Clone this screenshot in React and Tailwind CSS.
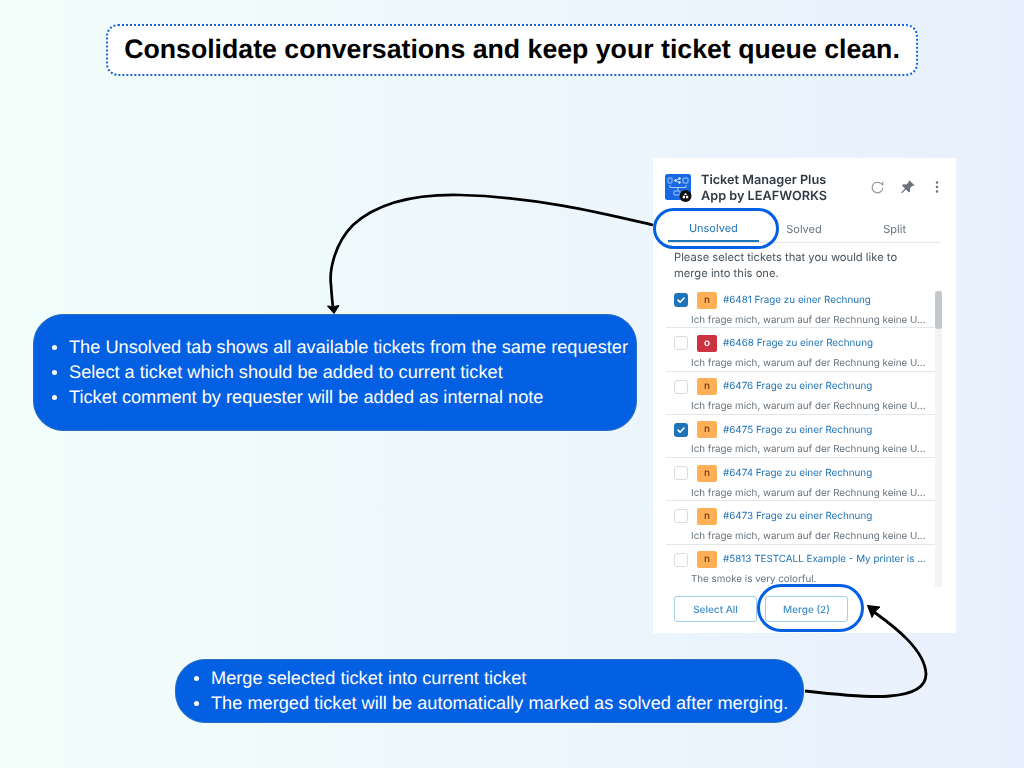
import React from "react";

const rows = [
  { c: true, b: "n", t: "#6481 Frage zu einer Rechnung", d: "Ich frage mich, warum auf der Rechnung keine U..." },
  { c: false, b: "o", t: "#6468 Frage zu einer Rechnung", d: "Ich frage mich, warum auf der Rechnung keine U..." },
  { c: false, b: "n", t: "#6476 Frage zu einer Rechnung", d: "Ich frage mich, warum auf der Rechnung keine U..." },
  { c: true, b: "n", t: "#6475 Frage zu einer Rechnung", d: "Ich frage mich, warum auf der Rechnung keine U..." },
  { c: false, b: "n", t: "#6474 Frage zu einer Rechnung", d: "Ich frage mich, warum auf der Rechnung keine U..." },
  { c: false, b: "n", t: "#6473 Frage zu einer Rechnung", d: "Ich frage mich, warum auf der Rechnung keine U..." },
  { c: false, b: "n", t: "#5813 TESTCALL Example - My printer is ...", d: "The smoke is very colorful." },
];

function Logo() {
  return (
    <svg width="29" height="29" viewBox="0 0 29 29" className="mt-[1px] shrink-0">
      <rect x="1" y="0" width="26" height="26" rx="2.5" fill="#1668e3" />
      <g fill="none" stroke="#bcd6fb" strokeWidth="0.9">
        <rect x="4" y="4" width="4" height="5" rx="0.8" />
        <rect x="19" y="4" width="5" height="5" rx="0.8" />
        <circle cx="11.5" cy="6.5" r="1" fill="#fff" />
        <circle cx="15.5" cy="4.5" r="1" fill="#fff" />
        <circle cx="15.5" cy="8.5" r="1" fill="#fff" />
        <path d="M11.5 6.5L15.5 4.5M11.5 6.5L15.5 8.5M6 11v2.5h16V11M14 13.5v3" />
        <rect x="10" y="17" width="6" height="4" rx="0.6" />
      </g>
      <circle cx="21.5" cy="22" r="6" fill="#111" />
      <path d="M21.5 18.7l1.5 2.3h-3zM18.8 21.8H21v2.4h-2.2zM22 21.8h2.2v2.4H22z" fill="#fff" />
    </svg>
  );
}

function Bullets({ items }) {
  return (
    <ul className="whitespace-nowrap">
      {items.map((t) => (
        <li key={t} className="flex items-center">
          <span className="mr-[12.5px] h-[5px] w-[5px] shrink-0 rounded-full bg-white" />
          <span>{t}</span>
        </li>
      ))}
    </ul>
  );
}

function Row({ r, last }) {
  return (
    <div className={last ? "ml-[13px] mr-[21px] flex h-[43.3px] shrink-0 flex-col pl-[8px] pt-[6.5px]" : "ml-[13px] mr-[21px] flex h-[43.3px] shrink-0 flex-col border-b border-[#e4e7ea] pl-[8px] pt-[6.5px]"}>
      <div className="flex h-[17px] items-center">
        {r.c ? (
          <span className="flex h-[14px] w-[14px] items-center justify-center rounded-[3px] bg-[#1f73b7]">
            <svg width="10" height="10" viewBox="0 0 10 10">
              <path d="M2 5.2l2.1 2L8 3" fill="none" stroke="#fff" strokeWidth="1.6" strokeLinecap="round" strokeLinejoin="round" />
            </svg>
          </span>
        ) : (
          <span className="h-[14px] w-[14px] rounded-[3px] border border-[#d8dcde] bg-white" />
        )}
        <span
          className={
            r.b === "n"
              ? "ml-[9px] flex h-[17px] w-[20px] items-center justify-center rounded-[2px] bg-[#ffb057] text-[10px] font-medium text-[#703815]"
              : "ml-[9px] flex h-[17px] w-[20px] items-center justify-center rounded-[2px] bg-[#cc3340] text-[10px] font-semibold text-white"
          }
        >
          {r.b}
        </span>
        <span className="ml-[6px] whitespace-nowrap text-[9.85px] text-[#1f73b7]">{r.t}</span>
      </div>
      <div className="ml-[17px] mt-[5px] whitespace-nowrap text-[9.8px] leading-[14px] text-[#68737d]">{r.d}</div>
    </div>
  );
}

export default function App() {
  return (
    <div className="relative flex h-[768px] w-[1024px] flex-col overflow-hidden bg-gradient-to-r from-[#f2fefa] to-[#e8f0fd] font-['Liberation_Sans',sans-serif] [text-rendering:geometricPrecision]">
      <div className="mx-[106px] mt-[24px] flex h-[52px] items-center justify-center rounded-[12px] border-2 border-dotted border-[#1a66e0] bg-white pb-[2px] text-[26.7px] font-bold text-black">
        Consolidate conversations and keep your ticket queue clean.
      </div>

      <div className="ml-[33px] mt-[82px] flex items-start">
        <div className="mt-[156px] flex h-[117px] w-[604px] items-center rounded-[30px] border border-[#2a70bd] bg-[#0460e2] pl-[17.5px] text-[18.2px] leading-[25px] text-white">
          <Bullets
            items={[
              "The Unsolved tab shows all available tickets from the same requester",
              "Select a ticket which should be added to current ticket",
              "Ticket comment by requester will be added as internal note",
            ]}
          />
        </div>

        <div className="ml-[16px] flex h-[475px] w-[303px] flex-col bg-white font-['Inter',sans-serif] blur-[0.4px]">
          <div className="flex h-[50px] items-start pl-[11px] pt-[15px]">
            <Logo />
            <div className="ml-[8px] w-[128px] whitespace-nowrap text-[12.7px] font-semibold leading-[16px] text-[#2f3941]">
              <div>Ticket Manager Plus</div>
              <div>App by LEAFWORKS</div>
            </div>
            <div className="ml-[41px] mt-[6px] flex items-center gap-[15px]">
              <svg width="15" height="15" viewBox="0 0 15 15" fill="none" stroke="#87929d" strokeWidth="1.1">
                <path d="M12.7 8.2A5.3 5.3 0 1 1 10.8 3.4L12.8 5V2" strokeLinecap="round" strokeLinejoin="round" />
              </svg>
              <svg width="16" height="16" viewBox="0 0 16 16" fill="#68737d">
                <path d="M9.6 1.4l5 5-1.3.7-1-.4-2.4 2.5.3 3.1-1.2 1.2-3-3-4 3.8-.8-.8 3.8-4-3-3L3.2 5.3l3.1.3 2.5-2.4-.4-1z" />
              </svg>
              <svg width="8" height="14" viewBox="0 0 8 14" fill="#68737d" className="ml-[2px]">
                <circle cx="4" cy="2.5" r="1.25" />
                <circle cx="4" cy="7" r="1.25" />
                <circle cx="4" cy="11.5" r="1.25" />
              </svg>
            </div>
          </div>

          <div className="mx-[15px] flex h-[35px] w-[272px] border-b border-[#e4e7ea] text-[11px] text-[#68737d]">
            <div className="flex h-[34px] w-[91px] items-center justify-center border-b-[2px] border-[#1f73b7] pt-[8px] text-[#1f73b7]">Unsolved</div>
            <div className="flex h-[34px] w-[91px] items-center justify-center pt-[8px]">Solved</div>
            <div className="flex h-[34px] w-[91px] items-center justify-center pt-[8px]">Split</div>
          </div>

          <p className="ml-[21px] mt-[6px] w-[250px] text-[11.2px] leading-[16px] text-[#49545c]">
            Please select tickets that you would like to merge into this one.
          </p>

          <div className="relative mt-[4px] h-[302px] overflow-hidden">
            <div className="flex flex-col">
              {rows.map((r, i) => (
                <Row key={r.t} r={r} last={i === rows.length - 1} />
              ))}
            </div>
            <div className="absolute right-[14px] top-[6px] bottom-0 w-[7px] bg-[#f2f3f4]" />
            <div className="absolute right-[14px] top-[6px] h-[38px] w-[7px] rounded-[3px] bg-[#c2c8cc]" />
          </div>

          <div className="ml-[21px] mt-[9px] flex gap-[8px] text-[10px] font-medium text-[#3f8dca]">
            <div className="flex h-[26px] w-[83px] items-center justify-center rounded-[3px] border border-[#a4cdec] pt-[3px]">Select All</div>
            <div className="flex h-[26px] w-[83px] items-center justify-center rounded-[3px] border border-[#a4cdec] pt-[3px]">Merge (2)</div>
          </div>
        </div>
      </div>

      <div className="ml-[175px] mt-[26px] flex h-[64px] w-[629px] items-center rounded-[30px] border border-[#2a70bd] bg-[#0460e2] pl-[17.5px] text-[18.2px] leading-[25px] text-white">
        <Bullets
          items={[
            "Merge selected ticket into current ticket",
            "The merged ticket will be automatically marked as solved after merging.",
          ]}
        />
      </div>

      <div className="absolute left-[653px] top-[208px] h-[41px] w-[126px] rounded-[21px] border-[3.5px] border-[#0460e2]" />
      <div className="absolute left-[757px] top-[584px] h-[48px] w-[107px] rounded-[24px] border-[3.5px] border-[#0460e2]" />

      <svg className="pointer-events-none absolute left-0 top-0" width="1024" height="768" fill="none">
        <path d="M653 225C610 215 540 197 460 195C410 194 375 205 353 225C335 243 329 270 331 285C331.500 292 332 300 333 307" stroke="#000" strokeWidth="2.7" />
        <path d="M327.500 306Q333 307.500 339 305.500L334 313.500Z" fill="#000" stroke="#000" strokeLinejoin="round" />
        <path d="M805 691C840 695 870 698 890 696C915 694 926 686 926 674C925 650 895 627 874 612" stroke="#000" strokeWidth="2.8" />
        <path d="M867.500 605.500L880 607Q875 610 872 617.500Z" fill="#000" stroke="#000" strokeLinejoin="round" />
      </svg>
    </div>
  );
}
